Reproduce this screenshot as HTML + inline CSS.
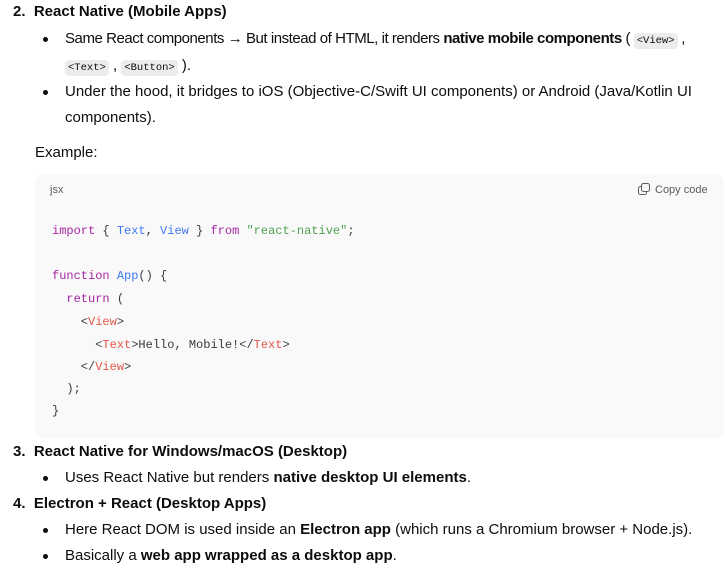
<!DOCTYPE html>
<html><head><meta charset="utf-8"><style>
body{margin:0;background:#fff;font-family:"Liberation Sans",sans-serif;color:#0d0d0d;font-size:15px;}
.l{position:absolute;white-space:nowrap;line-height:20px;}
.dot{position:absolute;width:5px;height:5px;border-radius:50%;background:#0d0d0d;}
code{font-family:"Liberation Mono",monospace;font-size:10.5px;background:#ececec;border-radius:4px;padding:2px 3px;letter-spacing:0;}
.box{position:absolute;left:35px;top:174px;width:689px;height:264px;background:#f9f9f9;border-radius:10px;}
.c{position:absolute;left:52px;font-family:"Liberation Mono",monospace;font-size:12px;white-space:pre;color:#383a42;line-height:16px;}
.k{color:#a626a4}.b{color:#4078f2}.s{color:#50a14f}.t{color:#e45649}
</style></head><body>
<div class="l" style="left:13px;top:2px;font-weight:bold">2.&nbsp; React Native (Mobile Apps)</div>
<div class="dot" style="left:43px;top:37px"></div>
<div class="l" style="left:65px;top:29px;letter-spacing:-0.45px">Same React components → But instead of HTML, it renders <b>native mobile components</b> ( <code>&lt;View&gt;</code> ,</div>
<div class="l" style="left:65px;top:56px"><code>&lt;Text&gt;</code> , <code>&lt;Button&gt;</code> ).</div>
<div class="dot" style="left:43px;top:90px"></div>
<div class="l" style="left:65px;top:82px">Under the hood, it bridges to iOS (Objective-C/Swift UI components) or Android (Java/Kotlin UI</div>
<div class="l" style="left:65px;top:108px">components).</div>
<div class="l" style="left:35px;top:143px">Example:</div>
<div class="box"></div>
<div class="l" style="left:50px;top:180px;font-size:11px;color:#5d5d5d">jsx</div>
<div class="l" style="left:638px;top:180px;font-size:11px;color:#5d5d5d"><svg width="12" height="12" viewBox="0 0 12 12" style="vertical-align:-2px;margin-right:5px"><rect x="3.5" y="0.5" width="8" height="8" rx="2" fill="none" stroke="#5d5d5d"/><path d="M3 3.5H2.5a2 2 0 0 0-2 2v4a2 2 0 0 0 2 2h4a2 2 0 0 0 2-2V9" fill="none" stroke="#5d5d5d"/></svg>Copy code</div>
<div class="c" style="top:223px"><span class="k">import</span> { <span class="b">Text</span>, <span class="b">View</span> } <span class="k">from</span> <span class="s">"react-native"</span>;</div>
<div class="c" style="top:268px"><span class="k">function</span> <span class="b">App</span>() {</div>
<div class="c" style="top:291px">  <span class="k">return</span> (</div>
<div class="c" style="top:314px">    &lt;<span class="t">View</span>&gt;</div>
<div class="c" style="top:337px">      &lt;<span class="t">Text</span>&gt;Hello, Mobile!&lt;/<span class="t">Text</span>&gt;</div>
<div class="c" style="top:359px">    &lt;/<span class="t">View</span>&gt;</div>
<div class="c" style="top:381px">  );</div>
<div class="c" style="top:403px">}</div>
<div class="l" style="left:13px;top:442px;font-weight:bold">3.&nbsp; React Native for Windows/macOS (Desktop)</div>
<div class="dot" style="left:43px;top:476px"></div>
<div class="l" style="left:65px;top:468px">Uses React Native but renders <b>native desktop UI elements</b>.</div>
<div class="l" style="left:13px;top:494px;font-weight:bold">4.&nbsp; Electron + React (Desktop Apps)</div>
<div class="dot" style="left:43px;top:528px"></div>
<div class="l" style="left:65px;top:520px">Here React DOM is used inside an <b>Electron app</b> (which runs a Chromium browser + Node.js).</div>
<div class="dot" style="left:43px;top:554px"></div>
<div class="l" style="left:65px;top:546px">Basically a <b>web app wrapped as a desktop app</b>.</div>
</body></html>
